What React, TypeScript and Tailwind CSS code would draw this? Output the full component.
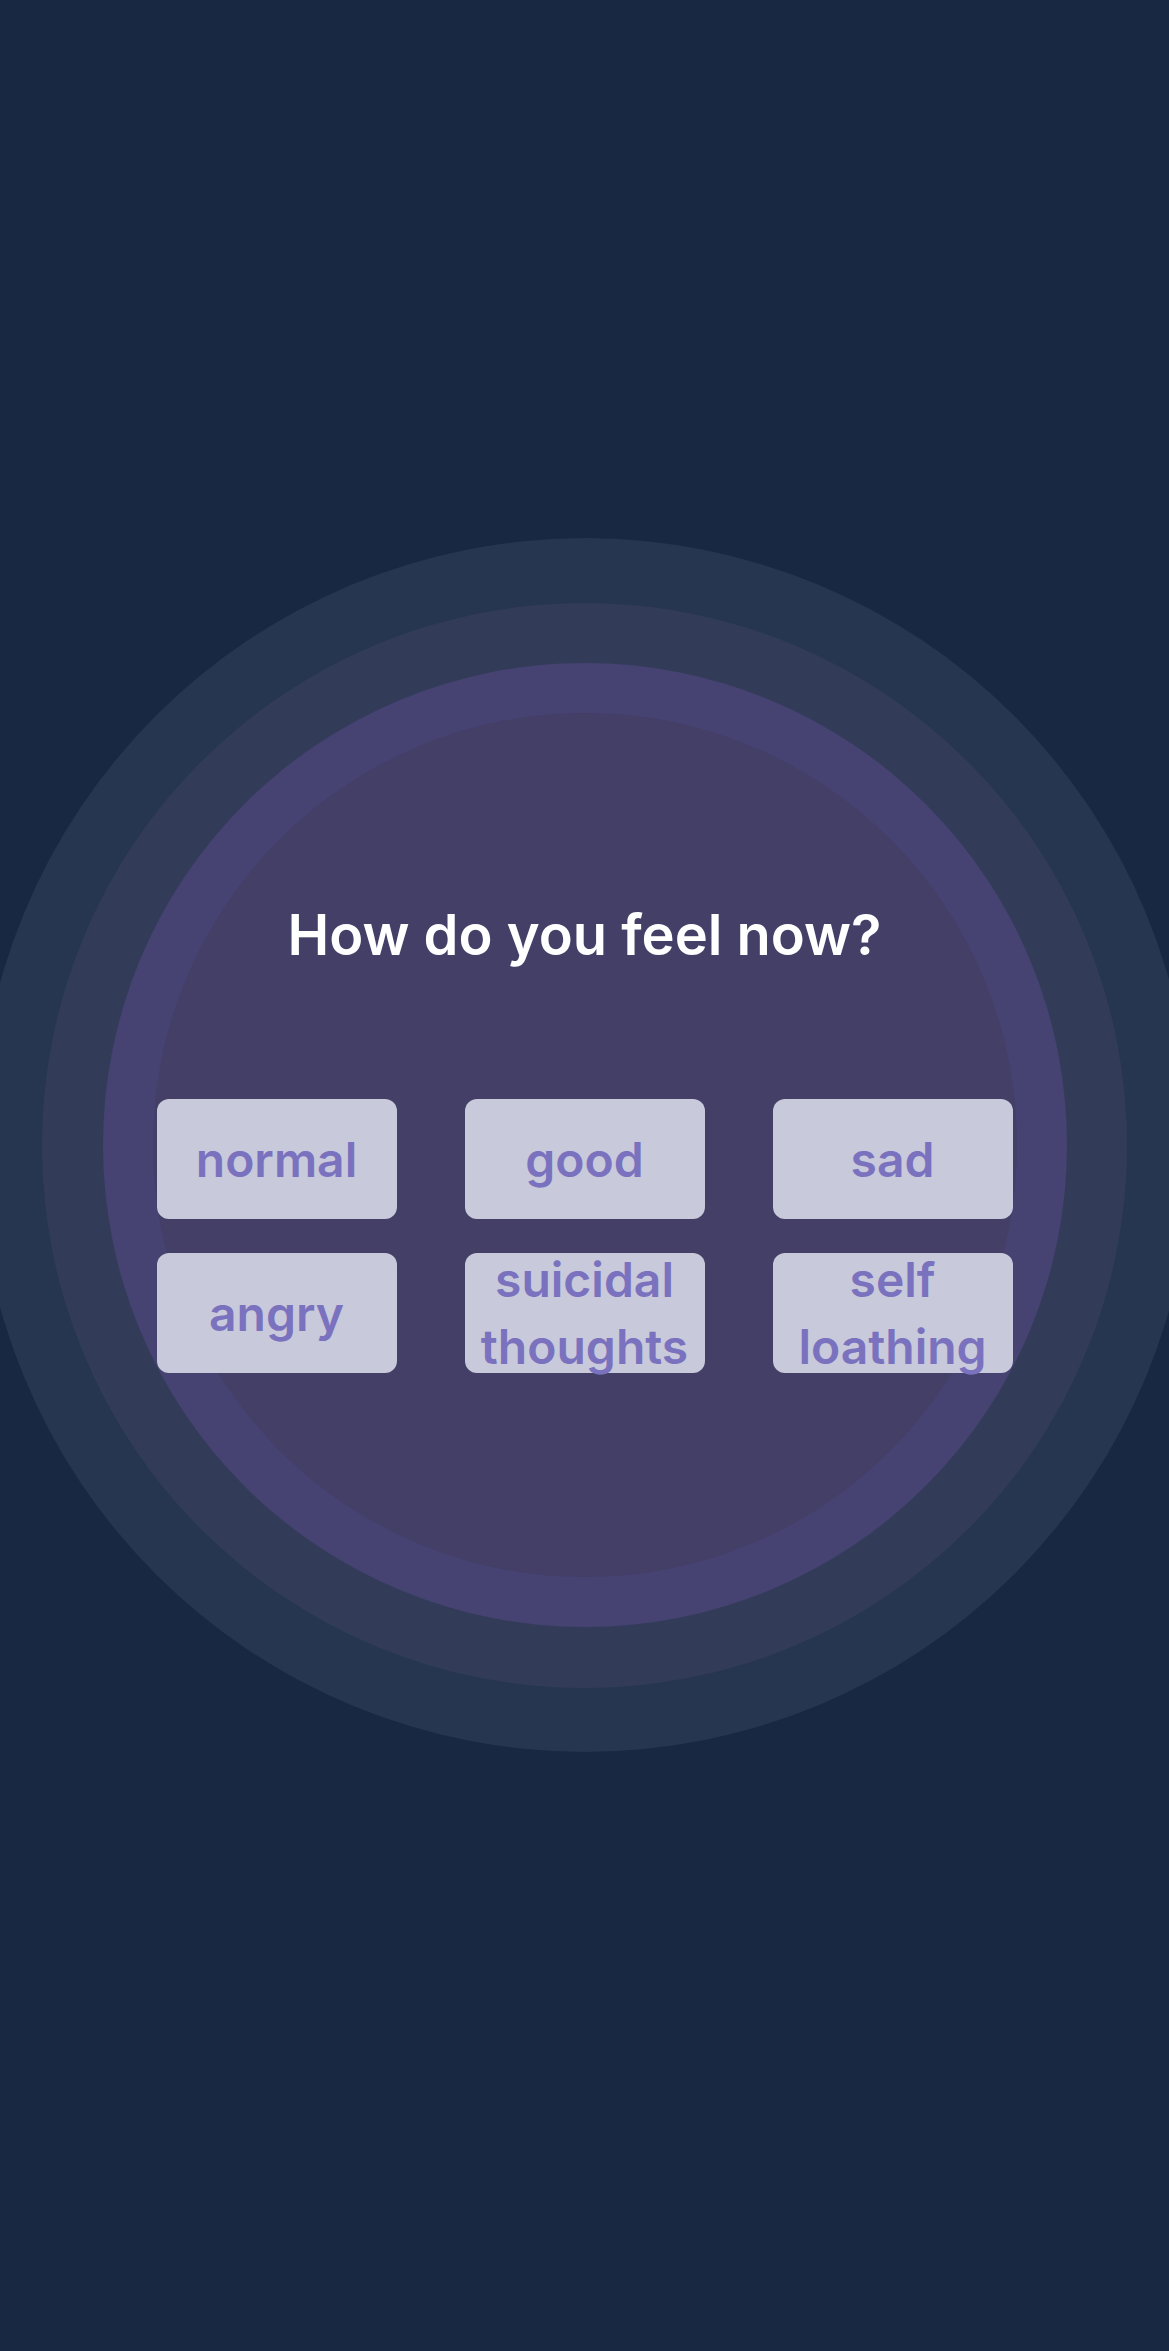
import React from 'react';

const moods = ['normal', 'good', 'sad', 'angry', 'suicidal thoughts', 'self loathing'];

function MoodButton({ label }: { label: string }) {
    return (
        <button className="flex h-[120px] w-[240px] items-center justify-center rounded-[12px] bg-[#c8c9da] px-2 text-center text-[48px] font-semibold leading-[67px] text-[#7a72be]">
            {label}
        </button>
    );
}

export default function App() {
    return (
        <div
            className="flex min-h-[2351px] w-full flex-col items-center overflow-hidden bg-[#182742] pt-[538px]"
            style={{ fontFamily: 'Inter, "Noto Sans", sans-serif' }}
        >
            {/* anneaux concentriques */}
            <div className="flex h-[1214px] w-[1214px] shrink-0 items-center justify-center rounded-full bg-[#263650]">
                <div className="flex h-[1085px] w-[1085px] shrink-0 items-center justify-center rounded-full bg-[#323c59]">
                    <div className="flex h-[964px] w-[964px] shrink-0 items-center justify-center rounded-full bg-[#464272]">
                        <div className="flex h-[864px] w-[864px] shrink-0 flex-col items-center rounded-full bg-[#433f67] pt-[194px]">
                            <h1 className="text-[56px] font-semibold leading-none text-white">How do you feel now?</h1>
                            <div className="mt-[136px] grid grid-cols-3 gap-x-[68px] gap-y-[34px]">
                                {moods.map(m => (
                                    <MoodButton key={m} label={m} />
                                ))}
                            </div>
                        </div>
                    </div>
                </div>
            </div>
        </div>
    );
}
